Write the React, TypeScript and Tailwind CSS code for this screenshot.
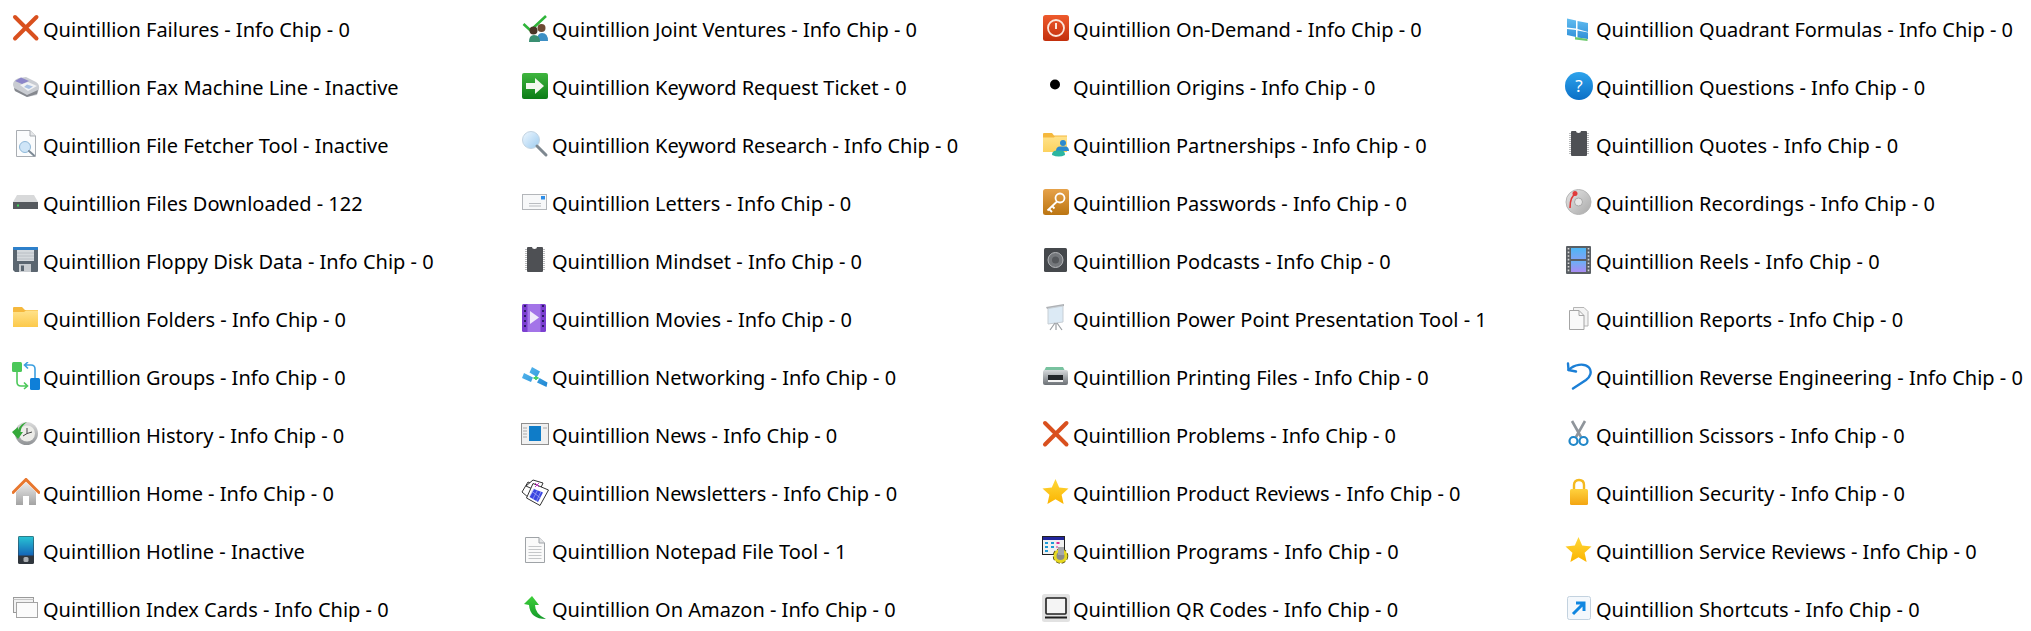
import type { ReactNode } from "react";

// Все иконки нарисованы в поле 28x28
function Svg({ children }: { children: ReactNode }) {
  return (
    <svg width="28" height="28" viewBox="0 0 28 28" className="shrink-0">
      {children}
    </svg>
  );
}

function Grad({ id, from, to, x2 = 0, y2 = 1 }: { id: string; from: string; to: string; x2?: number; y2?: number }) {
  return (
    <linearGradient id={id} x1="0" y1="0" x2={x2} y2={y2}>
      <stop offset="0" stopColor={from} />
      <stop offset="1" stopColor={to} />
    </linearGradient>
  );
}

const Cross = () => (
  <Svg>
    <path d="M3 3 L24.5 24.5 M24.5 3 L3 24.5" stroke="#d9501e" strokeWidth="4" strokeLinecap="round" fill="none" />
  </Svg>
);

const Fax = () => (
  <Svg>
    <path d="M1 13 C1 9 4 7 7 6 L14 5 L24 10 C27 12 27.5 14 27 17 L25 23 L15 25 L3 19 Z" fill="#c9ccd2" />
    <path d="M3 9 L9 5.5 L17 9 L10 12 Z" fill="#8c86c9" />
    <path d="M8 13 L16 10 L25 14 L16 19 Z" fill="#f1f2f4" />
    <path d="M15 12.5 L21 14.5 L17 17 L12 15 Z" fill="#a9c0e2" />
    <path d="M2 16 L15 23 L26 18 L25 22 L15 25 L3 19 Z" fill="#85888e" />
  </Svg>
);

const DocFetch = () => (
  <Svg>
    <path d="M4.5 0.5 H18 L23.5 6 V26.5 H4.5 Z" fill="#fbfcfd" stroke="#a9adb2" />
    <path d="M18 0.5 V6 H23.5" fill="#e6e8ea" stroke="#a9adb2" />
    <circle cx="13" cy="17" r="5.5" fill="#cfe5f7" stroke="#8fb8d8" />
    <path d="M17 21 L22 25.5" stroke="#7d8a96" strokeWidth="2" strokeLinecap="round" />
  </Svg>
);

const Drive = () => (
  <Svg>
    <path d="M5 7 H22 L26 14 H1 Z" fill="#d8d9da" />
    <rect x="1" y="14" width="25" height="7" fill="#55595e" />
    <rect x="5" y="16.5" width="2" height="2" fill="#3fd65a" />
  </Svg>
);

const Floppy = () => (
  <Svg>
    <path d="M2 1 H25 Q26 1 26 2 V25 Q26 26 25 26 H3 L1 24 V2 Q1 1 2 1 Z" fill="#5b6670" />
    <rect x="1" y="1" width="25" height="3" rx="1" fill="#2d80cb" />
    <rect x="5" y="4" width="17" height="11" fill="#d5d9dd" />
    <path d="M5 7 H22 M5 10 H22 M5 13 H22" stroke="#b9bec4" />
    <rect x="7" y="18" width="12" height="8" fill="#c9cdd1" />
    <rect x="9" y="19.5" width="3" height="5.5" fill="#5b6670" />
  </Svg>
);

const Folder = () => (
  <Svg>
    <defs>
      <Grad id="fold" from="#ffe28a" to="#fcc94a" />
    </defs>
    <path d="M1 4 Q1 3 2 3 H10 L13 6 H26 V23 H1 Z" fill="#f5b83d" />
    <path d="M1 8 H12 L14 6.5 H26 V23 H1 Z" fill="url(#fold)" />
  </Svg>
);

const Groups = () => (
  <Svg>
    <rect x="0" y="0" width="10" height="10" rx="1.5" fill="#4cc85a" />
    <rect x="18" y="16" width="10" height="12" rx="1.5" fill="#0f7fd8" />
    <path d="M5 10 V20 Q5 24 9 24 H15 M12 20.5 L15.5 24 L12 27" stroke="#4cc85a" strokeWidth="1.6" fill="none" />
    <path d="M23 16 V7 Q23 3 19 3 H13 M16 0 L12.5 3 L16 6.5" stroke="#3c9fe0" strokeWidth="1.6" fill="none" />
  </Svg>
);

const History = () => (
  <Svg>
    <defs>
      <Grad id="clock" from="#dcdcdc" to="#8f9295" />
    </defs>
    <circle cx="14.5" cy="13.5" r="11.5" fill="url(#clock)" />
    <circle cx="15" cy="13.5" r="8" fill="#ecece8" />
    <path d="M15 8 V13.5 L20 12 M15 13.5 L11 16" stroke="#444" strokeWidth="1" fill="none" />
    <path d="M0 12 L6 7 V10 Q9 3 15 2 Q9 6 8.5 12 L11 12 L6 19 Z" fill="#35a83a" />
  </Svg>
);

const Home = () => (
  <Svg>
    <defs>
      <Grad id="wall" from="#ececec" to="#a3a3a3" />
    </defs>
    <path d="M4 14 L14 4 L24 14 V27 H17 V18 H11 V27 H4 Z" fill="url(#wall)" />
    <path d="M1 14.5 L14 1.5 L27 14.5" stroke="#e8772e" strokeWidth="3" fill="none" strokeLinecap="round" />
  </Svg>
);

const Phone = () => (
  <Svg>
    <defs>
      <Grad id="screen" from="#28c4d4" to="#1565b8" />
    </defs>
    <rect x="6" y="0" width="16" height="28" rx="1.5" fill="#30363d" />
    <rect x="6.5" y="0.5" width="15" height="19" fill="url(#screen)" />
    <rect x="11.5" y="21" width="5" height="5" rx="1.5" fill="#a9adb2" />
  </Svg>
);

const Cards = () => (
  <Svg>
    <rect x="1.5" y="3.5" width="20" height="15" fill="#f2f2f2" stroke="#9a9a9a" />
    <path d="M1.5 5.5 H21.5" stroke="#c7c7c7" />
    <rect x="4.5" y="8.5" width="21" height="15" fill="#fbfbfb" stroke="#a4a4a4" />
  </Svg>
);

const Joint = () => (
  <Svg>
    <path d="M2.5 10 L9.5 16.5 L25 2" stroke="#2fb53a" strokeWidth="2.6" fill="none" />
    <circle cx="20.5" cy="14" r="4" fill="#6e4a33" />
    <path d="M16 27 Q16 19 21 19 Q27 19 27 27 Z" fill="#3d8fc4" />
    <circle cx="12.5" cy="16.5" r="4" fill="#4a3527" />
    <path d="M8 28 Q8 21 13 21 Q19 21 19 28 Z" fill="#3a8f72" />
  </Svg>
);

const GoArrow = () => (
  <Svg>
    <defs>
      <Grad id="go" from="#3fb53f" to="#0c7d16" />
    </defs>
    <rect x="1" y="1" width="26" height="26" rx="2" fill="url(#go)" />
    <path d="M5 11 H14 V6 L23 14 L14 22 V17 H5 Z" fill="#f3f8ef" />
  </Svg>
);

const Magnifier = () => (
  <Svg>
    <defs>
      <Grad id="glass" from="#f0f8ff" to="#9ccbef" x2={1} />
    </defs>
    <circle cx="10" cy="10" r="8.5" fill="url(#glass)" stroke="#c3d4e2" />
    <path d="M16 16 L25 25" stroke="#7e8890" strokeWidth="3" strokeLinecap="round" />
  </Svg>
);

const Letter = () => (
  <Svg>
    <rect x="1.5" y="6.5" width="24" height="15" fill="#f7f8f9" stroke="#b3b6ba" />
    <rect x="20" y="8" width="4" height="3.5" fill="#2d8de8" />
    <path d="M8 15.5 H20 M8 18 H20" stroke="#b9bcc0" />
  </Svg>
);

const Chip = () => (
  <Svg>
    <path d="M6 2 Q6 1 7 1 H11 Q11 3 13.5 3 Q16 3 16 1 H21 Q22 1 22 2 V25 Q22 26 21 26 H7 Q6 26 6 25 Z" fill="#4e5054" />
    <path d="M5 3 V25 M23 3 V25" stroke="#9a9c9e" strokeWidth="1.4" strokeDasharray="1 1" />
  </Svg>
);

const Movies = () => (
  <Svg>
    <rect x="1" y="0" width="24" height="28" rx="1.5" fill="#7b3fd0" />
    <path d="M3 2 H5 M21 2 H23 M3 7 H5 M21 7 H23 M3 12 H5 M21 12 H23 M3 17 H5 M21 17 H23 M3 22 H5 M21 22 H23" stroke="#2c1a66" strokeWidth="2" />
    <rect x="6.5" y="0" width="13" height="28" fill="#a374e8" />
    <path d="M9 7 L18 13.5 L9 20 Z" fill="#f1ebfb" />
  </Svg>
);

const Network = () => (
  <Svg>
    <defs>
      <Grad id="panel" from="#5bbcf0" to="#1f86d2" x2={1} />
    </defs>
    <path d="M11 5 L19 9.5 L16 15 L8.5 10.5 Z M3 11 L12 15.5 L10 20 L1 16 Z M18.5 16 L26.5 20.5 L25.5 25 L16 20.5 Z" fill="url(#panel)" />
    <path d="M12.5 16 H17.5 M15 14 V18" stroke="#45cf6a" strokeWidth="1.8" />
  </Svg>
);

const News = () => (
  <Svg>
    <rect x="0.5" y="3.5" width="27" height="21" fill="#f0f0f0" stroke="#8f8f8f" />
    <rect x="8" y="6" width="12" height="15" fill="#0f7cc8" />
    <path d="M2 8 H6 M2 11 H6 M2 14 H6 M2 17 H6 M22 8 H26" stroke="#aaa" />
  </Svg>
);

const Newsletters = () => (
  <Svg>
    <path d="M1 14 L7 4 L14 7 L8 20 Z" fill="#fff" stroke="#333" />
    <path d="M5 8 L12 2 L22 5 L18 14 Z" fill="#fff" stroke="#333" />
    <path d="M12 5.5 L27.5 12 L19 27.5 L5.5 20 Z" fill="#fff" stroke="#333" />
    <path d="M13 11 L22 14.5 L17 24 L8.5 19 Z" fill="#3a45e0" />
    <path d="M10.5 13 L19.5 20 M13 10.5 L9 18 M16.5 12 L12 21 M20 13.5 L15.5 23" stroke="#aab2f5" strokeWidth="0.7" />
    <path d="M14 5 L18 9 M18 5 L14 9" stroke="#c23ac2" />
  </Svg>
);

const Notepad = () => (
  <Svg>
    <path d="M4.5 1.5 H18 L23.5 7 V26.5 H4.5 Z" fill="#fafafa" stroke="#9fa3a7" />
    <path d="M18 1.5 V7 H23.5" fill="#e3e5e7" stroke="#9fa3a7" />
    <path d="M7.5 10.5 H20.5 M7.5 13.5 H20.5 M7.5 16.5 H20.5 M7.5 19.5 H20.5 M7.5 22.5 H20.5" stroke="#c5c7c9" />
  </Svg>
);

const UpArrow = () => (
  <Svg>
    <defs>
      <Grad id="up" from="#3ed03a" to="#159a2a" />
    </defs>
    <path d="M3 10 L11 2 L18 11 H14 Q14 20 25 25 Q9 25 8 11 Z" fill="url(#up)" />
  </Svg>
);

const Power = () => (
  <Svg>
    <defs>
      <Grad id="pow" from="#ee5a2c" to="#c22f0c" />
    </defs>
    <rect x="1" y="1" width="26" height="26" rx="2.5" fill="url(#pow)" />
    <circle cx="14" cy="14" r="8" stroke="#fbe7dc" strokeWidth="1.8" fill="none" />
    <path d="M14 9 V15" stroke="#fbe7dc" strokeWidth="2" />
  </Svg>
);

const Dot = () => (
  <Svg>
    <circle cx="13" cy="12.5" r="5" fill="#000" />
  </Svg>
);

const Partners = () => (
  <Svg>
    <defs>
      <Grad id="part" from="#ffe28a" to="#fcd25f" />
    </defs>
    <path d="M1 4 Q1 3 2 3 H10 L12 5.5 H25 V22 H1 Z" fill="#f5b83d" />
    <path d="M1 7.5 H12 L13 6.5 H25 V22 H1 Z" fill="url(#part)" />
    <circle cx="21" cy="13" r="3" fill="#2a8ad0" />
    <path d="M14 21 Q14 16.5 18 16.5 H24 Q27 17 27 21 Z" fill="#2a8ad0" />
    <path d="M10 25 Q10 21 14 20.5 H20 Q23 21 23 25 Q17 28 10 25 Z" fill="#2cb5a0" />
  </Svg>
);

const KeyTile = () => (
  <Svg>
    <defs>
      <Grad id="key" from="#e6a24a" to="#bb7512" />
    </defs>
    <rect x="1" y="1" width="26" height="26" rx="2.5" fill="url(#key)" />
    <circle cx="18" cy="10" r="4.5" stroke="#fff" strokeWidth="1.8" fill="none" />
    <path d="M15 13.5 L5.5 22.5 M7 21 L10 24 M10 18 L12.5 20.5" stroke="#fff" strokeWidth="1.8" fill="none" />
  </Svg>
);

const Speaker = () => (
  <Svg>
    <rect x="2" y="2" width="23" height="24" rx="1.5" fill="#45484c" />
    <circle cx="13.5" cy="14" r="7.5" fill="#75787c" stroke="#b5b7ba" />
    <circle cx="13.5" cy="14" r="3.5" fill="#55585c" />
  </Svg>
);

const Screen = () => (
  <Svg>
    <path d="M4 3 L22 0 V2 L5 5 Z" fill="#aeb1b5" />
    <path d="M6 4.5 L21 2 V18 L6 20 Z" fill="#dceaf5" stroke="#c7ced4" />
    <path d="M13 19 L8 26 M14 19 V26 M15 19 L20 26" stroke="#9b9fa3" strokeWidth="1.2" />
  </Svg>
);

const Printer = () => (
  <Svg>
    <defs>
      <Grad id="print" from="#d6d9dc" to="#6b7075" />
    </defs>
    <path d="M4 5 H21 L23 9 H2 Z" fill="#78c29f" />
    <rect x="1" y="8" width="25" height="15" rx="2" fill="url(#print)" />
    <rect x="6" y="13" width="15" height="5" fill="#22262a" />
    <rect x="6" y="18" width="15" height="2" fill="#f3f3f3" />
  </Svg>
);

const Star = () => (
  <Svg>
    <defs>
      <Grad id="star" from="#ffd83a" to="#fbb400" />
    </defs>
    <path d="M13.5 1 L17.2 9.6 L26.5 10.5 L19.6 16.7 L21.6 26 L13.5 21.2 L5.4 26 L7.4 16.7 L0.5 10.5 L9.8 9.6 Z" fill="url(#star)" />
  </Svg>
);

const Programs = () => (
  <Svg>
    <rect x="0.5" y="0.5" width="22" height="18" fill="#f1f1f1" stroke="#222" />
    <rect x="1" y="1" width="21" height="3" fill="#22269c" />
    <path d="M3 7 H6 M9 7 H12 M3 11 H6 M9 11 H12 M3 15 H6" stroke="#1f9bd6" strokeWidth="2" />
    <path d="M14.5 7 H17.5 M14.5 11 H15.5" stroke="#d92e96" strokeWidth="2" />
    <circle cx="18.5" cy="20" r="5.5" fill="none" stroke="#4a4410" strokeWidth="4.5" strokeDasharray="3 1.5" />
    <circle cx="18.5" cy="20" r="5.5" fill="#8a8a8a" stroke="#e6d820" strokeWidth="3" />
    <rect x="16" y="11" width="6" height="8" fill="#a5a7aa" />
  </Svg>
);

const Laptop = () => (
  <Svg>
    <rect x="0" y="0" width="28" height="28" rx="2.5" fill="#e2e2e2" />
    <rect x="4" y="4" width="20" height="16" rx="1" fill="#f4f4f4" stroke="#1f1f1f" strokeWidth="1.6" />
    <path d="M3 23.5 H25" stroke="#1f1f1f" strokeWidth="2" />
  </Svg>
);

const Quadrant = () => (
  <Svg>
    <defs>
      <Grad id="pane" from="#62bdf0" to="#2f8fd8" />
    </defs>
    <path d="M2 4.5 L11 6.5 V14.5 L2 13.5 Z M12.5 7 L23 9 V18 L12.5 15 Z M2 15 L11 16 V23 L2 21 Z M12.5 16.5 L23 18.5 V25 L12.5 23.5 Z" fill="url(#pane)" />
    <path d="M10 23 L22.5 25 V27 L10 25.5 Z" fill="#6cc96c" />
  </Svg>
);

const Help = () => (
  <Svg>
    <defs>
      <Grad id="help" from="#2da3ec" to="#0b6fc6" />
    </defs>
    <circle cx="14" cy="14" r="14" fill="url(#help)" />
    <text x="14" y="20" textAnchor="middle" fontSize="17" fontFamily="Noto Sans, sans-serif" fill="#fff">
      ?
    </text>
  </Svg>
);

const Disc = () => (
  <Svg>
    <defs>
      <Grad id="cd" from="#e6e6e6" to="#a9a9a9" x2={1} />
    </defs>
    <circle cx="13.5" cy="14" r="12.5" fill="url(#cd)" stroke="#b5b5b5" />
    <circle cx="13.5" cy="14" r="4" fill="#e8e8e8" stroke="#a9a9a9" />
    <path d="M5 20 Q5 8 11 6" stroke="#e03a3a" strokeWidth="1.6" fill="none" />
    <circle cx="10" cy="5.5" r="2.5" fill="#e03a3a" />
  </Svg>
);

const Reels = () => (
  <Svg>
    <defs>
      <Grad id="fa" from="#4db7f5" to="#7da4f5" />
      <Grad id="fb" from="#6ab0f5" to="#a98bf2" />
    </defs>
    <rect x="1" y="0" width="25" height="28" rx="1" fill="#5a5f64" />
    <rect x="6" y="2" width="15" height="11" fill="url(#fa)" />
    <rect x="6" y="15" width="15" height="11" fill="url(#fb)" />
    <path d="M3.5 2 V26 M23.5 2 V26" stroke="#d8d8d8" strokeWidth="1.6" strokeDasharray="1.6 2" />
  </Svg>
);

const Reports = () => (
  <Svg>
    <path d="M8.5 3.5 H19 L23 7.5 V22 H8.5 Z" fill="#f3f3f3" stroke="#b5b5b5" />
    <path d="M4.5 6.5 H14 L19 11.5 V25.5 H4.5 Z" fill="#f9f9f9" stroke="#a5a5a5" />
    <path d="M14 6.5 V11.5 H19" fill="none" stroke="#a5a5a5" />
  </Svg>
);

const Reverse = () => (
  <Svg>
    <path d="M3.5 8 C9 2.5 19 0.5 24 5.5 C27.5 10 25 15 21 18 L8 26.5" stroke="#1b7fd6" strokeWidth="2.4" fill="none" strokeLinecap="round" />
    <path d="M3 1.5 L3.5 8 L11 9.5" stroke="#1b7fd6" strokeWidth="2.4" fill="none" strokeLinecap="round" strokeLinejoin="round" />
  </Svg>
);

const Scissors = () => (
  <Svg>
    <path d="M7 1 L16 17 M20 1 L11 17" stroke="#8f959b" strokeWidth="2.6" />
    <circle cx="8.5" cy="21" r="4" stroke="#1f86c8" strokeWidth="2.2" fill="none" />
    <circle cx="18.5" cy="21" r="4" stroke="#1f86c8" strokeWidth="2.2" fill="none" />
  </Svg>
);

const Lock = () => (
  <Svg>
    <defs>
      <Grad id="lock" from="#ffd23e" to="#f3a512" />
    </defs>
    <path d="M9 12 V7 Q9 2 14 2 Q19 2 19 7 V12" stroke="#f4b91f" strokeWidth="2.4" fill="none" />
    <rect x="5" y="11" width="18" height="16" rx="1.5" fill="url(#lock)" />
  </Svg>
);

const Shortcut = () => (
  <Svg>
    <rect x="2.5" y="2.5" width="23" height="23" rx="2" fill="#f4f8fc" stroke="#c3d2df" />
    <path d="M8 20 L18 10 M11 9 H19 V17" stroke="#0f86e0" strokeWidth="3" fill="none" />
  </Svg>
);

const columns: { icon: () => ReactNode; label: string }[][] = [
  [
    { icon: Cross, label: "Quintillion Failures - Info Chip - 0" },
    { icon: Fax, label: "Quintillion Fax Machine Line - Inactive" },
    { icon: DocFetch, label: "Quintillion File Fetcher Tool - Inactive" },
    { icon: Drive, label: "Quintillion Files Downloaded - 122" },
    { icon: Floppy, label: "Quintillion Floppy Disk Data - Info Chip - 0" },
    { icon: Folder, label: "Quintillion Folders - Info Chip - 0" },
    { icon: Groups, label: "Quintillion Groups - Info Chip - 0" },
    { icon: History, label: "Quintillion History - Info Chip - 0" },
    { icon: Home, label: "Quintillion Home - Info Chip - 0" },
    { icon: Phone, label: "Quintillion Hotline - Inactive" },
    { icon: Cards, label: "Quintillion Index Cards - Info Chip - 0" },
  ],
  [
    { icon: Joint, label: "Quintillion Joint Ventures - Info Chip - 0" },
    { icon: GoArrow, label: "Quintillion Keyword Request Ticket - 0" },
    { icon: Magnifier, label: "Quintillion Keyword Research - Info Chip - 0" },
    { icon: Letter, label: "Quintillion Letters - Info Chip - 0" },
    { icon: Chip, label: "Quintillion Mindset - Info Chip - 0" },
    { icon: Movies, label: "Quintillion Movies - Info Chip - 0" },
    { icon: Network, label: "Quintillion Networking - Info Chip - 0" },
    { icon: News, label: "Quintillion News - Info Chip - 0" },
    { icon: Newsletters, label: "Quintillion Newsletters - Info Chip - 0" },
    { icon: Notepad, label: "Quintillion Notepad File Tool - 1" },
    { icon: UpArrow, label: "Quintillion On Amazon - Info Chip - 0" },
  ],
  [
    { icon: Power, label: "Quintillion On-Demand - Info Chip - 0" },
    { icon: Dot, label: "Quintillion Origins - Info Chip - 0" },
    { icon: Partners, label: "Quintillion Partnerships - Info Chip - 0" },
    { icon: KeyTile, label: "Quintillion Passwords - Info Chip - 0" },
    { icon: Speaker, label: "Quintillion Podcasts - Info Chip - 0" },
    { icon: Screen, label: "Quintillion Power Point Presentation Tool - 1" },
    { icon: Printer, label: "Quintillion Printing Files - Info Chip - 0" },
    { icon: Cross, label: "Quintillion Problems - Info Chip - 0" },
    { icon: Star, label: "Quintillion Product Reviews - Info Chip - 0" },
    { icon: Programs, label: "Quintillion Programs - Info Chip - 0" },
    { icon: Laptop, label: "Quintillion QR Codes - Info Chip - 0" },
  ],
  [
    { icon: Quadrant, label: "Quintillion Quadrant Formulas - Info Chip - 0" },
    { icon: Help, label: "Quintillion Questions - Info Chip - 0" },
    { icon: Chip, label: "Quintillion Quotes - Info Chip - 0" },
    { icon: Disc, label: "Quintillion Recordings - Info Chip - 0" },
    { icon: Reels, label: "Quintillion Reels - Info Chip - 0" },
    { icon: Reports, label: "Quintillion Reports - Info Chip - 0" },
    { icon: Reverse, label: "Quintillion Reverse Engineering - Info Chip - 0" },
    { icon: Scissors, label: "Quintillion Scissors - Info Chip - 0" },
    { icon: Lock, label: "Quintillion Security - Info Chip - 0" },
    { icon: Star, label: "Quintillion Service Reviews - Info Chip - 0" },
    { icon: Shortcut, label: "Quintillion Shortcuts - Info Chip - 0" },
  ],
];

export default function App() {
  return (
    <div className="grid h-[631px] grid-cols-[509px_521px_523px_1fr] overflow-hidden bg-white pl-3 font-['Noto_Sans',sans-serif] text-[20px] text-black">
      {columns.map((items, i) => (
        <div key={i}>
          {items.map((item) => (
            <div key={item.label} className="flex h-[58px] items-start gap-[3px] pt-3.5 whitespace-nowrap">
              <item.icon />
              <span className="leading-[32px]">{item.label}</span>
            </div>
          ))}
        </div>
      ))}
    </div>
  );
}
